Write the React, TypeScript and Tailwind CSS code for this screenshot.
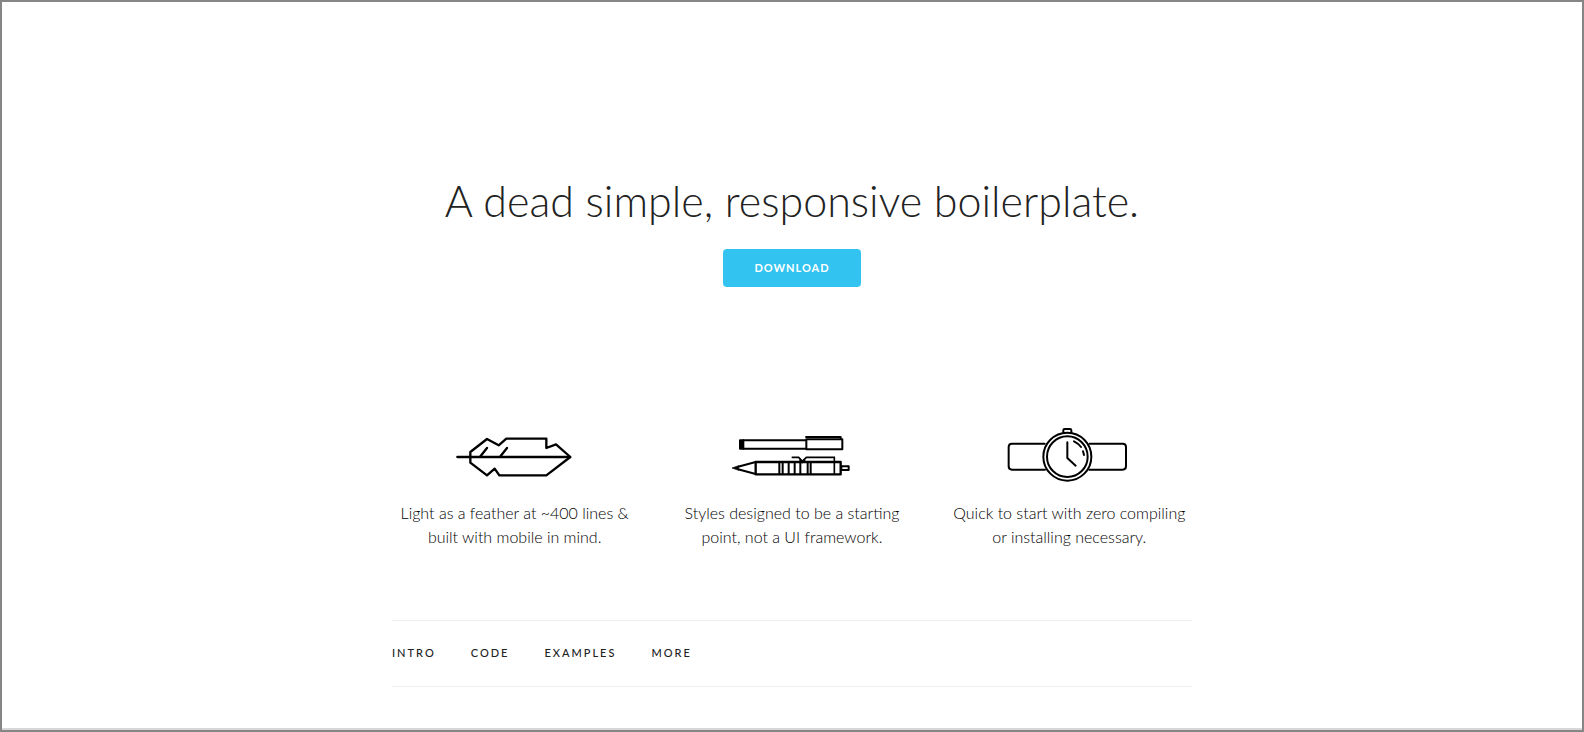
import type { ReactNode } from "react";

function FeatherIcon() {
  return (
    <svg viewBox="-1 0 420 210" className="h-[70px] w-[140px]" fill="none" stroke="#000" strokeWidth="7" strokeLinecap="round" strokeLinejoin="round" aria-hidden="true">
      <path d="M36 111H374" />
      <path d="M75 111V96L125 57L160 76L183 56H303V84L332 73L375 111L303 166H162L148 146L125 166L75 128Z" />
      <path d="M106 108L125 84M166 108L185 84" />
    </svg>
  );
}

function PensIcon() {
  return (
    <svg viewBox="6 0 420 210" className="h-[70px] w-[140px]" fill="none" stroke="#000" strokeWidth="6" strokeLinejoin="round" aria-hidden="true">
      <path d="M68 61H259M68 86H259" />
      <path d="M60 61H70V86H60Z" fill="#000" />
      <path d="M259 58H367V88H259Z" />
      <path d="M256 51H362V58" />
      <path d="M107 126L54 140M107 162L54 148" />
      <path d="M36 144L56 137V151Z" fill="#000" strokeWidth="2" />
      <path d="M107 126H362V163H107Z" strokeWidth="7" />
      <path d="M178 126V162M188 126V162M206 126V162M224 126V162M241 126V162M263 126V162M272 126V162" />
      <path d="M343 112V162" strokeWidth="5" />
      <path d="M215 112H236L247 124L259 112H345" strokeWidth="5" />
      <path d="M239 118L247 127L255 118" />
      <path d="M364 139H386V150H364Z" />
    </svg>
  );
}

function WatchIcon() {
  return (
    <svg viewBox="-2 0 420 210" className="h-[70px] w-[140px]" fill="none" stroke="#000" strokeWidth="6" strokeLinecap="round" strokeLinejoin="round" aria-hidden="true">
      <path d="M135 71H37Q27 71 27 81V139Q27 149 37 149H136" />
      <path d="M270 71H369Q379 71 379 81V139Q379 149 369 149H269" />
      <circle cx="203" cy="110" r="72" />
      <circle cx="203" cy="110" r="61" />
      <path d="M191 38V31Q191 27 195 27H211Q215 27 215 31V38" />
      <path d="M203 67V114L228 137" />
      <path d="M223 64Q236 70 244 81M250 94L253 105" />
    </svg>
  );
}

function ValueProp({ icon, children }: { icon: ReactNode; children: ReactNode }) {
  return (
    <div className="flex flex-col items-center text-center">
      {icon}
      <p className="mt-[11px] text-base leading-6 text-black sm:whitespace-nowrap">{children}</p>
    </div>
  );
}

const links = ["Intro", "Code", "Examples", "More"];

export default function App() {
  return (
    <div className="flex min-h-screen flex-col border-2 border-[#868686] bg-white font-['Lato','Liberation_Sans',sans-serif] font-light text-[#222]">
      <main className="mx-auto w-full max-w-[800px] grow">
        <header className="flex flex-col items-center pt-[174px] text-center">
          <h1 className="text-[43px] leading-[50px]">A dead simple, responsive boilerplate.</h1>
          <a href="#intro" className="mt-[23px] flex h-[38px] items-center rounded bg-[#33c3f0] px-[31px] text-[11px] font-bold uppercase tracking-[1px] text-white">
            Download
          </a>
        </header>
        <section className="mt-[133px] grid gap-8 sm:grid-cols-3">
          <ValueProp icon={<FeatherIcon />}>
            Light as a feather at ~400 lines &amp;<br />built with mobile in mind.
          </ValueProp>
          <ValueProp icon={<PensIcon />}>
            Styles designed to be a starting<br />point, not a UI framework.
          </ValueProp>
          <ValueProp icon={<WatchIcon />}>
            Quick to start with zero compiling<br />or installing necessary.
          </ValueProp>
        </section>
        <nav className="mt-[71px] flex h-[67px] items-center gap-[35px] border-y border-[#eee]">
          {links.map((link) => (
            <a key={link} href={`#${link.toLowerCase()}`} className="text-[11px] font-medium uppercase tracking-[2px]">
              {link}
            </a>
          ))}
        </nav>
      </main>
      <div className="h-[2px] bg-[#d8d8d8]" />
    </div>
  );
}
